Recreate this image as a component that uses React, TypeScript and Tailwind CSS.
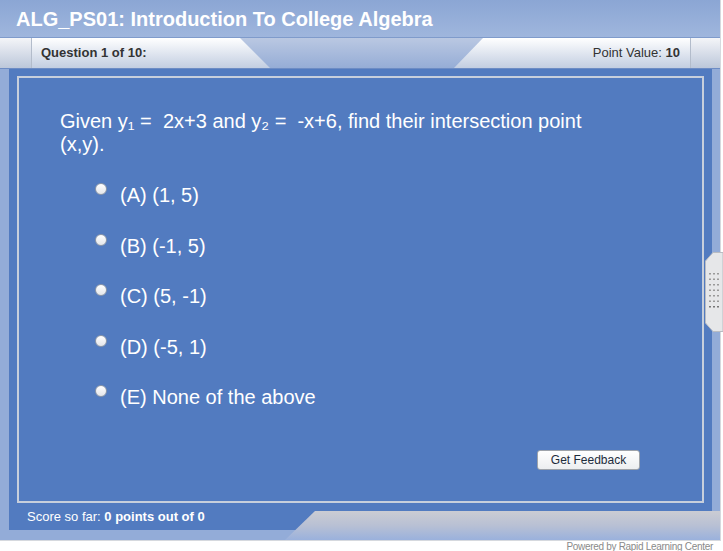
import React from "react";

const options = [
  "(A) (1, 5)",
  "(B) (-1, 5)",
  "(C) (5, -1)",
  "(D) (-5, 1)",
  "(E) None of the above",
];

function Radio() {
  return (
    <span className="mb-[12px] block h-[12px] w-[12px] shrink-0 rounded-full border border-[#8c97a8] bg-gradient-to-b from-white to-[#e4e6ea]" />
  );
}

function Grip() {
  const rows = [0, 1, 2, 3, 4, 5, 6];
  const cols = [4, 8, 12];
  return (
    <svg width="18" height="80" viewBox="0 0 18 80">
      <path
        d="M8 0.5 H18 V79.5 H8 L0.5 71 V9 Z"
        fill="#e6e7e9"
        stroke="#b9bcc2"
        strokeWidth="1"
      />
      {rows.map((r) =>
        cols.map((c) => (
          <rect
            key={`${r}-${c}`}
            x={c}
            y={21 + r * 5.5}
            width="2"
            height="1.5"
            fill={r === 6 ? "#777" : "#9a9a9a"}
          />
        )),
      )}
    </svg>
  );
}

export default function App() {
  return (
    <div className="relative h-[551px] w-[723px] overflow-hidden bg-white font-['Liberation_Sans',Arial,sans-serif]">
      <div className="flex h-[541px] w-[721px] flex-col border-b border-r border-[#d6d9de] bg-[#93acd8]">
        {/* title bar */}
        <div className="h-[38px] shrink-0 border-b border-[#7f9bcb] bg-gradient-to-b from-[#8ba6d4] to-[#9fb6dd] pl-[16px] pt-[9px]">
          <h1 className="text-[20px] font-bold leading-[20px] text-white">
            ALG_PS01: Introduction To College Algebra
          </h1>
        </div>

        {/* question bar */}
        <div className="relative flex h-[31px] shrink-0 border-b border-[#6d8cc4] text-[13px] text-[#333]">
          <div className="w-[32px] shrink-0 border-r border-[#b3bccb] bg-gradient-to-b from-[#f4f5f8] to-[#bcc7da]" />
          <div className="flex flex-1 items-center justify-between bg-gradient-to-b from-white to-[#c3cee1] pl-[9px] pr-[10px]">
            <span className="font-bold">Question 1 of 10:</span>
            <span>
              Point Value: <b>10</b>
            </span>
          </div>
          <div className="w-[30px] shrink-0 border-l border-[#b3bccb] bg-gradient-to-b from-[#f4f5f8] to-[#bcc7da]" />
          <div className="absolute left-[240px] top-0 h-[30px] w-[243px] bg-gradient-to-b from-[#bac8e2] to-[#96add6] [clip-path:polygon(0_0,100%_0,calc(100%-29px)_100%,30px_100%)]" />
        </div>

        {/* stage */}
        <div className="flex flex-1 flex-col pb-[10px] pl-[9px] pr-[8px]">
          <div className="flex flex-1 flex-col bg-[#527bc0] px-[8px] pt-[7px]">
            <div className="flex h-[427px] flex-col border-2 border-[#c7cfdc] pl-[41px] pt-[32px] text-white">
              <p className="w-[560px] whitespace-pre-wrap text-[20px] leading-[23px]">
                {"Given y\u2081 =  2x+3 and y\u2082 =  -x+6, find their intersection point (x,y)."}
              </p>
              <ul className="mt-[14px] flex flex-col pl-[35px]">
                {options.map((o) => (
                  <li key={o} className="flex h-[50.5px] items-center">
                    <Radio />
                    <span className="ml-[13px] text-[20px]">{o}</span>
                  </li>
                ))}
              </ul>
              <div className="mt-[27px] flex justify-end pr-[62px]">
                <button className="h-[20px] w-[103px] rounded-[3px] border border-[#9ea3aa] bg-gradient-to-b from-white to-[#eceef0] text-[12px] leading-[18px] text-[#1c2c3c]">
                  Get Feedback
                </button>
              </div>
            </div>
            <div className="flex h-[27px] items-center pl-[10px] text-[13px] text-white">
              Score so far:&nbsp;<b>0 points out of 0</b>
            </div>
          </div>
        </div>
      </div>

      {/* bottom-right tab */}
      <div className="absolute left-[285px] top-[511px] h-[29px] w-[435px] bg-gradient-to-b from-[#cbccd3] via-[#b8c0d4] to-[#9ab1dc] [clip-path:polygon(30px_0,100%_0,100%_100%,0_100%)]" />

      {/* side grip */}
      <div className="absolute left-[705px] top-[252px]">
        <Grip />
      </div>

      <div className="pr-[10px] text-right text-[10px] leading-[11px] tracking-[-0.3px] text-[#8a8a8a]">
        Powered by Rapid Learning Center
      </div>
    </div>
  );
}
